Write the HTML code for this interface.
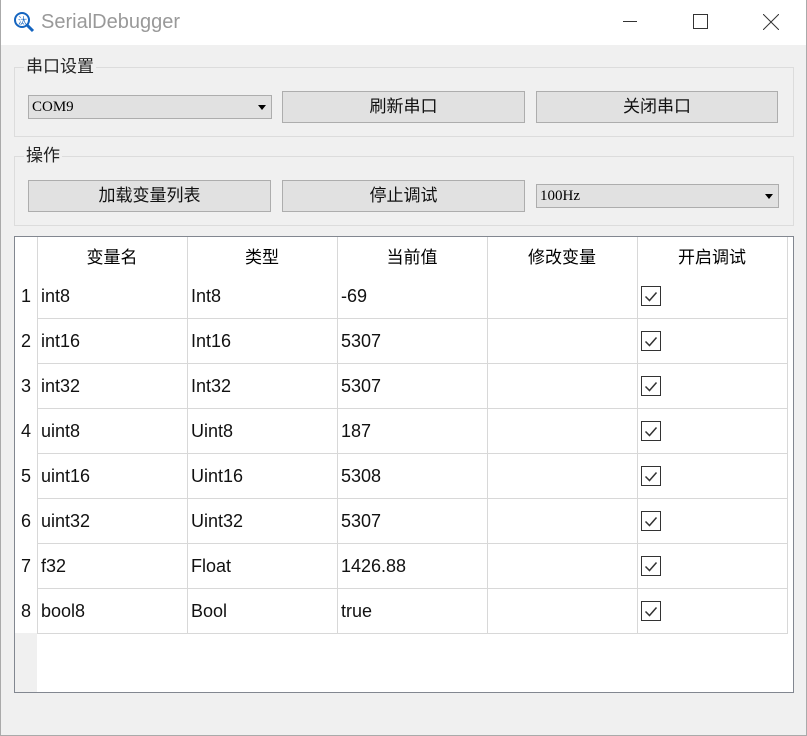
<!DOCTYPE html>
<html><head><meta charset="utf-8"><style>
*{margin:0;padding:0;box-sizing:border-box}
body{width:807px;height:736px;background:#f0f0f0;font-family:"Liberation Sans","Noto Sans CJK SC",sans-serif;position:relative;overflow:hidden}
.a{position:absolute}
.title{left:0;top:0;width:807px;height:45px;background:#fff}
.grp{border:1px solid #dcdcdc}
.gt{background:#f0f0f0;padding:0 2px;font-size:17px;color:#222;line-height:20px}
.btn{background:#e1e1e1;border:1px solid #adadad;font-size:17px;text-align:center;color:#111}
.cb{background:#e1e1e1;border:1px solid #adadad;font-family:"Liberation Serif",serif;font-size:15px;padding-left:3px;color:#000}
.cb:after{content:"";position:absolute;right:5px;top:9px;border:4px solid transparent;border-top:5px solid #000;border-bottom:none}
.cell{font-size:18px;color:#111;line-height:45px;padding-left:4px}
.hl{background:#d8d8d8}
.chk{width:20px;height:20px;border:1px solid #333;background:#fff}
</style></head><body>
<div class="a title"></div>
<div class="a" style="left:0;top:0;width:807px;height:736px;border:1px solid #aaa;border-top:none"></div>
<svg class="a" style="left:13px;top:11px" width="22" height="22" viewBox="0 0 22 22"><circle cx="9" cy="9" r="7" fill="none" stroke="#1565c0" stroke-width="2"/><path d="M14 14l6 6" stroke="#1565c0" stroke-width="3"/><text x="5" y="13" font-size="9" fill="#1565c0" font-family="Noto Sans CJK SC">汰</text></svg>
<div class="a" style="left:41px;top:11px;font-size:20px;color:#999">SerialDebugger</div>
<div class="a" style="left:623px;top:21px;width:14px;height:1px;background:#333"></div>
<div class="a" style="left:693px;top:14px;width:15px;height:15px;border:1px solid #333"></div>
<svg class="a" style="left:763px;top:14px" width="16" height="16"><path d="M0 0L16 16M16 0L0 16" stroke="#333"/></svg>

<div class="a grp" style="left:14px;top:67px;width:780px;height:70px"></div>
<div class="a gt" style="left:24px;top:57px">串口设置</div>
<div class="a cb" style="left:28px;top:95px;width:244px;height:24px;line-height:22px">COM9</div>
<div class="a btn" style="left:282px;top:91px;width:243px;height:32px;line-height:30px">刷新串口</div>
<div class="a btn" style="left:536px;top:91px;width:242px;height:32px;line-height:30px">关闭串口</div>

<div class="a grp" style="left:14px;top:156px;width:780px;height:70px"></div>
<div class="a gt" style="left:24px;top:146px">操作</div>
<div class="a btn" style="left:28px;top:180px;width:243px;height:32px;line-height:30px">加载变量列表</div>
<div class="a btn" style="left:282px;top:180px;width:243px;height:32px;line-height:30px">停止调试</div>
<div class="a cb" style="left:536px;top:184px;width:243px;height:24px;line-height:22px">100Hz</div>

<div class="a" style="left:14px;top:236px;width:780px;height:457px;background:#fff;border:1px solid #828790"></div>
<div class="a" style="left:15px;top:633px;width:22px;height:59px;background:#f0f0f0"></div>
<div id="t"></div>
<script>
var cols=[37,187,337,487,637,787],h=["变量名","类型","当前值","修改变量","开启调试"];
var d=[["int8","Int8","-69"],["int16","Int16","5307"],["int32","Int32","5307"],["uint8","Uint8","187"],["uint16","Uint16","5308"],["uint32","Uint32","5307"],["f32","Float","1426.88"],["bool8","Bool","true"]];
var s="";
for(var i=0;i<5;i++){s+='<div class="a" style="left:'+cols[i]+'px;top:240px;width:150px;text-align:center;font-size:17px;line-height:36px">'+h[i]+'</div>';}
for(var i=0;i<6;i++)s+='<div class="a" style="left:'+cols[i]+'px;top:237px;width:1px;height:396px;background:#d8d8d8"></div>';
for(var r=0;r<8;r++){var y=274+r*45;
s+='<div class="a hl" style="left:37px;top:'+(y+44)+'px;width:751px;height:1px"></div>';
s+='<div class="a cell" style="left:15px;top:'+y+'px;width:22px;text-align:center;padding:0">'+(r+1)+'</div>';
for(var c=0;c<3;c++)s+='<div class="a cell" style="left:'+cols[c]+'px;top:'+y+'px">'+d[r][c]+'</div>';
s+='<div class="a chk" style="left:641px;top:'+(y+12)+'px"><svg width="18" height="18" style="position:absolute;left:0;top:0"><path d="M3.5 9.5l4 4 7-8" fill="none" stroke="#333" stroke-width="1.5"/></svg></div>';}
document.getElementById("t").innerHTML=s;
</script>
</body></html>
